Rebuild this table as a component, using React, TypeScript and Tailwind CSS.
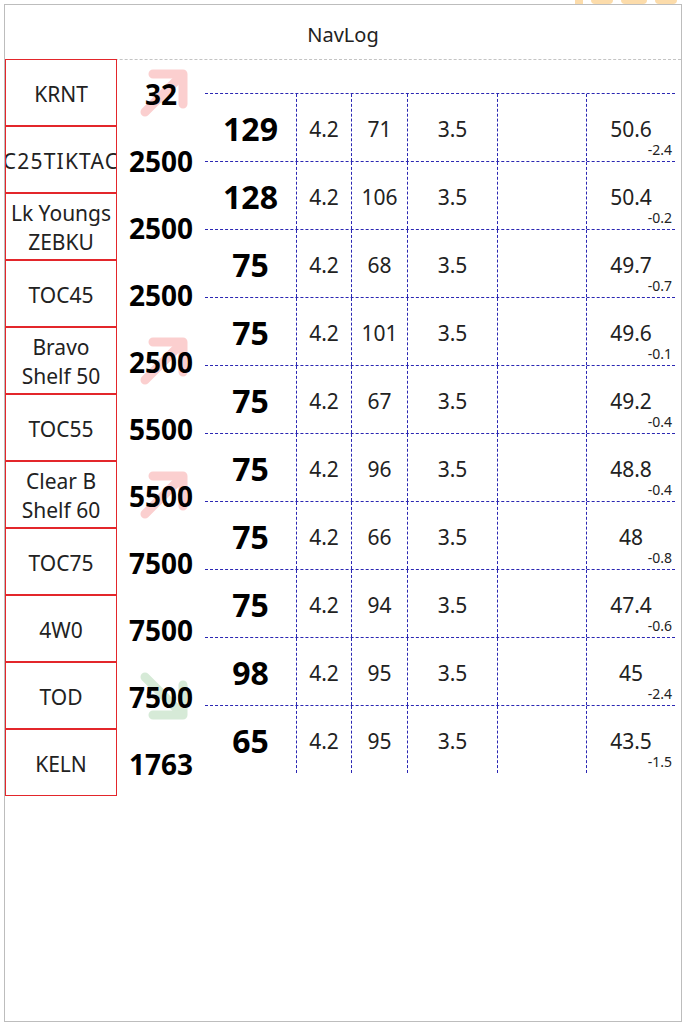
import React from 'react';

type Trend = 'up' | 'down' | null;

const waypoints: { name: string[]; alt: string; trend: Trend }[] = [
  { name: ['KRNT'], alt: '32', trend: 'up' },
  { name: ['C25TIKTAC'], alt: '2500', trend: null },
  { name: ['Lk Youngs', 'ZEBKU'], alt: '2500', trend: null },
  { name: ['TOC45'], alt: '2500', trend: null },
  { name: ['Bravo', 'Shelf 50'], alt: '2500', trend: 'up' },
  { name: ['TOC55'], alt: '5500', trend: null },
  { name: ['Clear B', 'Shelf 60'], alt: '5500', trend: 'up' },
  { name: ['TOC75'], alt: '7500', trend: null },
  { name: ['4W0'], alt: '7500', trend: null },
  { name: ['TOD'], alt: '7500', trend: 'down' },
  { name: ['KELN'], alt: '1763', trend: null },
];

const legs = [
  { hdg: '129', dist: '4.2', gs: '71', time: '3.5', fuel: '50.6', burn: '-2.4' },
  { hdg: '128', dist: '4.2', gs: '106', time: '3.5', fuel: '50.4', burn: '-0.2' },
  { hdg: '75', dist: '4.2', gs: '68', time: '3.5', fuel: '49.7', burn: '-0.7' },
  { hdg: '75', dist: '4.2', gs: '101', time: '3.5', fuel: '49.6', burn: '-0.1' },
  { hdg: '75', dist: '4.2', gs: '67', time: '3.5', fuel: '49.2', burn: '-0.4' },
  { hdg: '75', dist: '4.2', gs: '96', time: '3.5', fuel: '48.8', burn: '-0.4' },
  { hdg: '75', dist: '4.2', gs: '66', time: '3.5', fuel: '48', burn: '-0.8' },
  { hdg: '75', dist: '4.2', gs: '94', time: '3.5', fuel: '47.4', burn: '-0.6' },
  { hdg: '98', dist: '4.2', gs: '95', time: '3.5', fuel: '45', burn: '-2.4' },
  { hdg: '65', dist: '4.2', gs: '95', time: '3.5', fuel: '43.5', burn: '-1.5' },
];

const TrendArrow = ({ trend }: { trend: Trend }) => {
  if (!trend) return null;
  const up = trend === 'up';
  return (
    <svg
      className="absolute left-[22px] top-[9px] w-[50px] h-[50px]"
      viewBox="0 0 50 50"
      fill="none"
      stroke={up ? '#fbcfcf' : '#d6ead7'}
      strokeWidth="9"
      strokeLinejoin="round"
      strokeLinecap="round"
    >
      {up ? (
        <>
          <path d="M6 44 L42 8" />
          <path d="M14 6 H44 V36" />
        </>
      ) : (
        <>
          <path d="M6 6 L42 42" />
          <path d="M14 44 H44 V14" />
        </>
      )}
    </svg>
  );
};

const cell = 'flex items-center justify-center pt-[5px] border-l border-dashed border-[#2b27b3]';

const App = () => {
  return (
    <div className="bg-white min-h-[1023px] pt-[4px] relative" style={{ fontFamily: '"Noto Sans", "Open Sans", sans-serif' }}>
      <div className="absolute top-0 right-0 h-[4px] w-[110px] overflow-hidden flex gap-[8px] pl-[3px]">
        <div className="w-[8px] bg-[#fcdcab]" />
        <div className="w-[22px] bg-[#fcdcab] rounded-b-[6px]" />
        <div className="w-[26px] bg-[#fcdcab] rounded-b-[10px]" />
        <div className="w-[22px] bg-[#fcdcab] rounded-b-[10px]" />
      </div>

      <div className="ml-[4px] w-[678px] h-[1018px] border border-[#bdbdbd]">
        <div className="h-[55px] flex items-center justify-center pt-[6px] border-b border-dashed border-[#c4c4c4] text-[20px] text-[#222]">
          NavLog
        </div>

        <div className="flex">
          <div className="w-[112px] flex flex-col -mt-px">
            {waypoints.map((wp, i) => (
              <div
                key={i}
                className="h-[67px] border border-[#e3262b] flex flex-col items-center justify-center pt-[3px] overflow-hidden text-center text-[21px] leading-[29px] text-[#222]"
              >
                {wp.name.map((line, j) => (
                  <span key={j} className={line.length > 8 && wp.name.length === 1 ? 'whitespace-nowrap tracking-[1.2px]' : 'whitespace-nowrap'}>
                    {line}
                  </span>
                ))}
              </div>
            ))}
          </div>

          <div className="w-[88px] flex flex-col -mt-px">
            {waypoints.map((wp, i) => (
              <div key={i} className="relative h-[67px] flex items-center justify-center pt-[3px]">
                <TrendArrow trend={wp.trend} />
                <span className="relative text-[28px] font-bold text-black">{wp.alt}</span>
              </div>
            ))}
          </div>

          <div className="w-[470px] mt-[33px]">
            {legs.map((leg, i) => (
              <div
                key={i}
                className="h-[68px] grid grid-cols-[91px_55px_56px_90px_89px_89px] border-t border-dashed border-[#2b27b3] text-[21px] text-[#222]"
              >
                <div className="flex items-center justify-center pt-[3px] text-[32px] font-bold text-black">{leg.hdg}</div>
                <div className={cell}>{leg.dist}</div>
                <div className={cell}>{leg.gs}</div>
                <div className={cell}>{leg.time}</div>
                <div className={cell}></div>
                <div className="flex flex-col justify-end pb-[4px] border-l border-dashed border-[#2b27b3]">
                  <span className="text-center leading-[26px]">{leg.fuel}</span>
                  <span className="self-end pr-[3px] text-[14px] leading-[15px]">{leg.burn}</span>
                </div>
              </div>
            ))}
          </div>
        </div>
      </div>
    </div>
  );
};

export default App;
